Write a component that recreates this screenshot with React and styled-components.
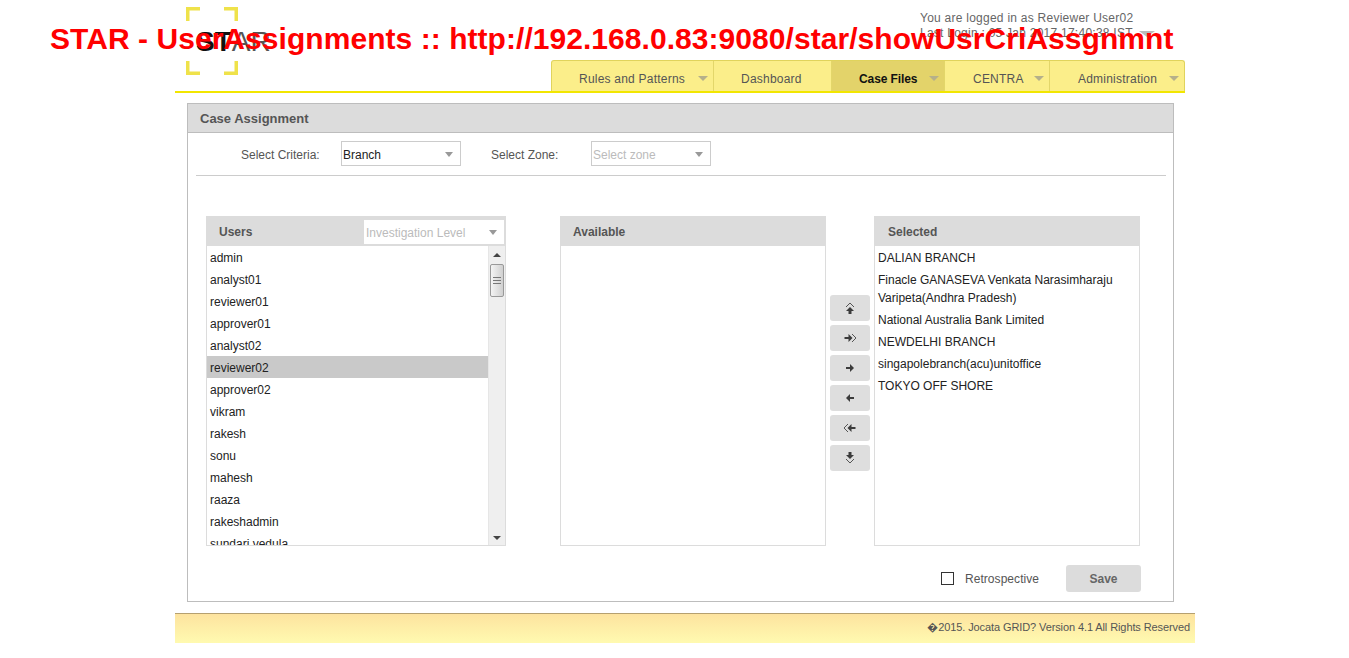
import styled, { createGlobalStyle } from "styled-components";

const users = [
	"admin",
	"analyst01",
	"reviewer01",
	"approver01",
	"analyst02",
	"reviewer02",
	"approver02",
	"vikram",
	"rakesh",
	"sonu",
	"mahesh",
	"raaza",
	"rakeshadmin",
	"sundari.vedula",
];

const selected = [
	"DALIAN BRANCH",
	"Finacle GANASEVA Venkata Narasimharaju Varipeta(Andhra Pradesh)",
	"National Australia Bank Limited",
	"NEWDELHI BRANCH",
	"singapolebranch(acu)unitoffice",
	"TOKYO OFF SHORE",
];

const menu = [
	{ label: "Rules and Patterns", width: 162, pad: 27, arrow: true },
	{ label: "Dashboard", width: 118, pad: 27 },
	{ label: "Case Files", width: 113, pad: 27, arrow: true, active: true },
	{ label: "CENTRA", width: 105, pad: 28, arrow: true },
	{ label: "Administration", width: 134, pad: 28, arrow: true },
];

const moves = [
	{ id: "top", arrow: "M7 5 11 9H8.5V12H5.5V9H3Z", chevron: "M3 5 7 1 11 5" },
	{ id: "all-right", arrow: "M1.5 5H5.5V2L9.5 6 5.5 10V7H1.5Z", chevron: "M9 2 13 6 9 10" },
	{ id: "right", arrow: "M3 5H7V2L11 6 7 10V7H3Z" },
	{ id: "left", arrow: "M11 5H7V2L3 6 7 10V7H11Z" },
	{ id: "all-left", arrow: "M12.5 5H8.5V2L4.5 6 8.5 10V7H12.5Z", chevron: "M5 2 1 6 5 10" },
	{ id: "bottom", arrow: "M5.5 0H8.5V3H11L7 7 3 3H5.5Z", chevron: "M3 7 7 11 11 7" },
];

const Brackets = () => (
	<BracketSvg width="52" height="68" viewBox="0 0 52 68" fill="none" stroke="#efe24a" strokeWidth="3.5">
		<path d="M14 1.75H1.75V14M38 1.75H50.25V14M1.75 54V66.25H14M50.25 54V66.25H38" />
	</BracketSvg>
);

const App = () => {
	return (
		<Page>
			<GlobalStyle />
			<Shot>STAR - UserAssignments :: http://192.168.0.83:9080/star/showUsrCriAssgnmnt</Shot>
			<Header>
				<LogoBox>
					<Brackets />
					<LogoText>
						ST<LogoFade>AR</LogoFade>
					</LogoText>
				</LogoBox>
				<HeaderRight>
					<UserInfo>
						<span>You are logged in as Reviewer User02</span>
						<span>Last Login : 05 Jan 2017 17:40:38 IST</span>
						<UserCaret />
					</UserInfo>
					<Nav>
						{menu.map((item) => (
							<NavItem key={item.label} $width={item.width} $pad={item.pad} $active={item.active}>
								{item.label}
								{item.arrow && <NavCaret />}
							</NavItem>
						))}
					</Nav>
				</HeaderRight>
			</Header>

			<Panel>
				<PanelTitle>Case Assignment</PanelTitle>
				<Filters>
					<FilterLabel $width={100}>Select Criteria:</FilterLabel>
					<Select>
						Branch
						<SelectCaret />
					</Select>
					<FilterLabel $width={130} $left={30}>
						Select Zone:
					</FilterLabel>
					<Select $disabled>
						Select zone
						<SelectCaret />
					</Select>
				</Filters>
				<Divider />
				<Columns>
					<UsersBox $width={300}>
						<ListHead>
							<HeadLabel>Users</HeadLabel>
							<HeadSelect>
								Investigation Level
								<SelectCaret />
							</HeadSelect>
						</ListHead>
						<ListBody>
							<Rows>
								{users.map((u) => (
									<Row key={u} $active={u === "reviewer02"}>
										{u}
									</Row>
								))}
							</Rows>
							<ScrollBar>
								<ScrollUp />
								<ScrollThumb>
									<Grip />
								</ScrollThumb>
								<ScrollDown />
							</ScrollBar>
						</ListBody>
					</UsersBox>

					<ListBox $width={266}>
						<ListHead>
							<HeadLabel>Available</HeadLabel>
						</ListHead>
						<ListBody />
					</ListBox>

					<MoveButtons>
						{moves.map((m) => (
							<MoveButton key={m.id}>
								<svg width="14" height="12" viewBox="0 0 14 12">
									<path d={m.arrow} fill="#3c3c3c" />
									{m.chevron && <path d={m.chevron} fill="none" stroke="#555" strokeWidth="1" />}
								</svg>
							</MoveButton>
						))}
					</MoveButtons>

					<ListBox $width={266}>
						<ListHead>
							<HeadLabel $left={13}>Selected</HeadLabel>
						</ListHead>
						<ListBody>
							<Rows>
								{selected.map((s) => (
									<SelectedRow key={s}>{s}</SelectedRow>
								))}
							</Rows>
						</ListBody>
					</ListBox>
				</Columns>
				<Actions>
					<Check />
					<CheckLabel>Retrospective</CheckLabel>
					<SaveButton>Save</SaveButton>
				</Actions>
			</Panel>

			<Footer>�2015. Jocata GRID? Version 4.1 All Rights Reserved</Footer>
		</Page>
	);
};

export default App;

const GlobalStyle = createGlobalStyle`
	html, body {
		margin: 0;
		padding: 0;
		background: #fff;
	}
	body {
		font-family: "Liberation Sans", Arial, sans-serif;
		font-size: 12px;
		color: #4a4a55;
		overflow: hidden;
	}
`;

const Page = styled.div`
	width: 1020px;
	height: 658px;
	margin-left: 175px;
`;

const Shot = styled.div`
	position: absolute;
	left: 50px;
	top: 20px;
	font-size: 30px;
	line-height: 38px;
	letter-spacing: 0.05px;
	font-weight: 700;
	color: #f00;
	white-space: nowrap;
	z-index: 5;
`;

const Header = styled.header`
	display: flex;
	justify-content: space-between;
	width: 1010px;
	height: 91px;
	border-bottom: 2px solid #f2e600;
`;

const LogoBox = styled.div`
	position: relative;
	width: 52px;
	height: 68px;
	margin: 7px 0 0 11px;
`;

const BracketSvg = styled.svg`
	display: block;
`;

const LogoText = styled.div`
	position: absolute;
	left: 10px;
	top: 18px;
	font-size: 28px;
	font-weight: 700;
	line-height: 34px;
	color: #111;
	white-space: nowrap;
`;

const LogoFade = styled.span`
	font-weight: 400;
	color: #555;
`;

const HeaderRight = styled.div`
	display: flex;
	flex-direction: column;
	align-items: flex-end;
`;

const UserInfo = styled.div`
	position: relative;
	display: flex;
	flex-direction: column;
	width: 265px;
	margin-top: 11px;
	line-height: 15px;
	letter-spacing: 0.25px;
	color: #666;
`;

const UserCaret = styled.i`
	position: absolute;
	left: 219px;
	top: 20px;
	border-style: solid;
	border-width: 6px 8px 0;
	border-color: #bbb transparent transparent;
`;

const Nav = styled.nav`
	display: flex;
	width: 634px;
	height: 31px;
	box-sizing: border-box;
	margin-top: auto;
	background: #fbee8a;
	border: 1px solid #e0d35c;
	border-bottom: 0;
	border-radius: 3px 3px 0 0;
`;

const NavItem = styled.div`
	position: relative;
	display: flex;
	align-items: center;
	flex: none;
	box-sizing: border-box;
	width: ${(p) => p.$width}px;
	padding-left: ${(p) => p.$pad}px;
	padding-top: 5px;
	border-right: 1px solid #e3d66a;
	background: ${(p) => (p.$active ? "#e3d36a" : "transparent")};
	color: ${(p) => (p.$active ? "#111" : "#555")};
	font-weight: ${(p) => (p.$active ? 700 : 400)};
	letter-spacing: ${(p) => (p.$active ? "-0.1px" : "0.22px")};

	&:last-child {
		border-right: 0;
	}
`;

const NavCaret = styled.i`
	position: absolute;
	right: 5px;
	top: 15px;
	border-style: solid;
	border-width: 5px 5px 0;
	border-color: #b5b08a transparent transparent;
`;

const Panel = styled.main`
	width: 987px;
	height: 499px;
	box-sizing: border-box;
	margin: 10px 0 0 12px;
	border: 1px solid #bdbdbd;
`;

const PanelTitle = styled.h2`
	margin: 0;
	height: 28px;
	padding-left: 12px;
	background: #dcdcdc;
	border-bottom: 1px solid #bdbdbd;
	font-size: 13px;
	font-weight: 700;
	line-height: 30px;
	color: #555;
`;

const Filters = styled.div`
	display: flex;
	align-items: center;
	height: 25px;
	margin-top: 8px;
	padding-left: 53px;
`;

const FilterLabel = styled.label`
	flex: none;
	box-sizing: border-box;
	width: ${(p) => p.$width}px;
	padding-left: ${(p) => p.$left || 0}px;
	padding-top: 2px;
	color: #555;
`;

const Select = styled.div`
	position: relative;
	width: 120px;
	height: 25px;
	box-sizing: border-box;
	border: 1px solid #ccc;
	padding-left: 1px;
	line-height: 26px;
	color: ${(p) => (p.$disabled ? "#bbb" : "#222")};
`;

const SelectCaret = styled.i`
	position: absolute;
	right: 7px;
	top: 10px;
	border-style: solid;
	border-width: 5px 4.5px 0;
	border-color: #999 transparent transparent;
`;

const Divider = styled.hr`
	height: 1px;
	margin: 9px 7px 0 8px;
	border: 0;
	background: #ccc;
`;

const Columns = styled.div`
	display: flex;
	gap: 4px;
	height: 330px;
	margin: 40px 0 0 18px;
`;

const ListBox = styled.section`
	display: flex;
	flex-direction: column;
	flex: none;
	box-sizing: border-box;
	width: ${(p) => p.$width}px;
	height: 330px;
	border: 1px solid #dcdcdc;
	overflow: hidden;
`;

const UsersBox = styled(ListBox)`
	margin-right: 50px;
`;

const ListHead = styled.div`
	display: flex;
	align-items: center;
	justify-content: space-between;
	flex: none;
	height: 29px;
	padding-right: 1px;
	background: #dcdcdc;
`;

const HeadLabel = styled.span`
	margin-left: ${(p) => p.$left || 12}px;
	padding-top: 1px;
	font-weight: 700;
	color: #555;
`;

const HeadSelect = styled.div`
	position: relative;
	width: 140px;
	height: 24px;
	margin-top: 1px;
	box-sizing: border-box;
	background: #fff;
	padding-left: 2px;
	line-height: 26px;
	color: #bbb;
`;

const ListBody = styled.div`
	display: flex;
	flex: 1;
	min-height: 0;
`;

const Rows = styled.div`
	flex: 1;
	min-width: 0;
	overflow: hidden;
`;

const Row = styled.div`
	height: 22px;
	padding-left: 3px;
	line-height: 24px;
	color: #222;
	background: ${(p) => (p.$active ? "#c9c9c9" : "transparent")};
`;

const SelectedRow = styled.div`
	padding: 3px 3px 1px;
	line-height: 18px;
	color: #222;
`;

const ScrollBar = styled.div`
	display: flex;
	flex-direction: column;
	align-items: center;
	width: 16px;
	flex: none;
	background: #efefef;
	border-left: 1px solid #e6e6e6;
`;

const ScrollUp = styled.i`
	margin-top: 7px;
	border-style: solid;
	border-width: 0 4px 4px;
	border-color: transparent transparent #444;
`;

const ScrollDown = styled.i`
	margin-top: auto;
	margin-bottom: 5px;
	border-style: solid;
	border-width: 4px 4px 0;
	border-color: #444 transparent transparent;
`;

const ScrollThumb = styled.div`
	display: flex;
	align-items: center;
	justify-content: center;
	width: 14px;
	height: 33px;
	margin-top: 7px;
	box-sizing: border-box;
	border: 1px solid #999;
	border-radius: 2px;
	background: linear-gradient(to right, #f4f4f4, #d0d0d0);
`;

const Grip = styled.div`
	width: 8px;
	height: 8px;
	background: repeating-linear-gradient(to bottom, #777 0 1px, transparent 1px 3px);
`;

const MoveButtons = styled.div`
	display: flex;
	flex-direction: column;
	flex: none;
	gap: 4px;
	width: 40px;
	margin-top: 79px;
`;

const MoveButton = styled.button`
	display: flex;
	align-items: center;
	justify-content: center;
	width: 40px;
	height: 26px;
	padding: 0;
	border: 0;
	border-radius: 3px;
	background: #dedede;
`;

const Actions = styled.div`
	display: flex;
	align-items: center;
	margin-top: 19px;
	padding-left: 753px;
`;

const Check = styled.span`
	flex: none;
	width: 11px;
	height: 11px;
	border: 1px solid #333;
`;

const CheckLabel = styled.span`
	width: 101px;
	margin-left: 11px;
	letter-spacing: 0.05px;
	color: #555;
`;

const SaveButton = styled.button`
	width: 75px;
	height: 27px;
	padding: 0;
	border: 0;
	border-radius: 3px;
	background: #dcdcdc;
	font: 700 12px "Liberation Sans", Arial, sans-serif;
	color: #666;
`;

const Footer = styled.footer`
	height: 29px;
	margin-top: 11px;
	padding-right: 5px;
	border-top: 1px solid #b5a070;
	background: linear-gradient(to bottom, #fde39f, #fffab0);
	font-size: 11px;
	line-height: 27px;
	letter-spacing: -0.1px;
	text-align: right;
	color: #555;
`;
